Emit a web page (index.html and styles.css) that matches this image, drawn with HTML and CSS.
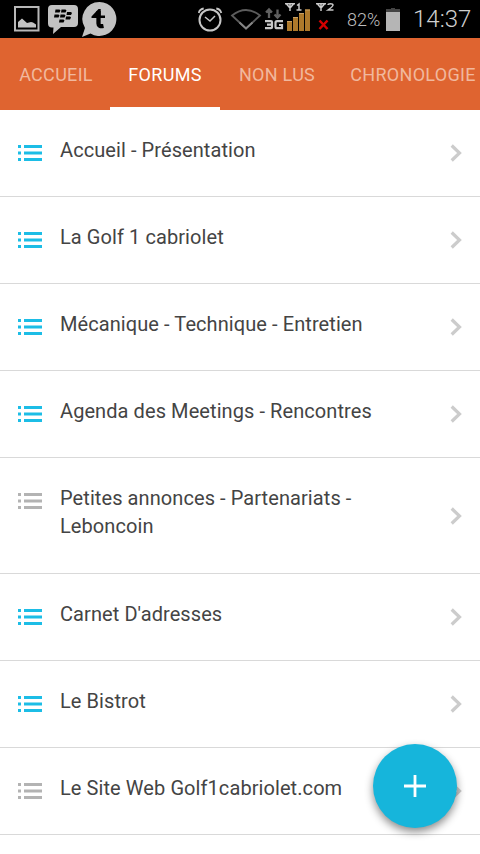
FILE: index.html
```html
<!DOCTYPE html>
<html lang="fr">
<head>
<meta charset="utf-8">
<title>Forums</title>
<link rel="stylesheet" href="styles.css">
</head>
<body>
<svg width="0" height="0" class="defs">
<symbol id="list" viewBox="0 0 24 16"><path d="M0 0h3v3H0zM6 0h18v3H6zM0 6.5h3v3H0zM6 6.5h18v3H6zM0 13h3v3H0zM6 13h18v3H6z" fill="currentColor"/></symbol>
<symbol id="chev" viewBox="0 0 12 18"><path d="M1.700 1.500L9.500 9l-7.800 7.500" fill="none" stroke="#ccc" stroke-width="3.200"/></symbol>
</svg>
<header class="status">
<svg class="s-pic" width="26" height="26" viewBox="0 0 26 26"><rect x="1" y="1" width="23.500" height="23.500" fill="none" stroke="#b8b8b8" stroke-width="2"/><path d="M4 21.500V16l4-3.500 5 4.500 4-1 2 .5 3 2v3z" fill="#c2c2c2"/></svg>
<svg class="s-bbm" width="31" height="32" viewBox="0 0 31 32"><path d="M4 1h22q4 0 4 4v14q0 4-4 4H13l-8 7 .5-6.500H4q-4 0-4-4V5q0-4 4-4z" fill="#c2c2c2"/><path d="M7.500 5.500h4l1 1-1 2H7zM13.500 5.500h4l1 1-1 2H13zM6.500 10.500h4l1 1-1 2H6zM12.500 10.500h4l1 1-1 2H12zM19 8h4l1 1-1 2h-4.500zM18 12.500h4l1 1-1 2h-4.500zM11.500 15.500h4l1 1-1 2H11z" fill="#000"/></svg>
<svg class="s-tap" width="36" height="37" viewBox="0 0 36 37"><path d="M18.500 1a17 17 0 1 1-9 31.500L1 36l3-9A17 17 0 0 1 18.500 1z" fill="#c2c2c2"/><path d="M17.500 10v12.500q0 3.500 5 2.500" fill="none" stroke="#000" stroke-width="4.300"/><path d="M10.500 17v-1.500l7-7.500h2.200v6.500H24V17z" fill="#000"/></svg>
<svg class="s-sys" width="141" height="34" viewBox="0 0 141 34">
<g fill="none" stroke="#c6c6c6" stroke-width="2"><circle cx="12" cy="20" r="10.500"/><path d="M7 17l5 4 5-5" stroke-width="1.500"/><path d="M.7 13q1-4 5-4.500M23.300 13q-1-4-5-4.500" stroke-width="1.800"/></g>
<path d="M34 15.500q14-11 28 0L48 28.500z" fill="none" stroke="#5c5c5c" stroke-width="1.800"/><path d="M41.500 22.500l6.500 6 6.500-6" fill="none" stroke="#858585" stroke-width="1.800"/>
<path d="M71 18v-7M68 12.500l3-3 3 3M79.500 9.500V17M76.500 14.500l3 3 3-3" fill="none" stroke="#606060" stroke-width="2.300"/>
<g fill="none" stroke="#c8c8c8" stroke-width="2.200"><path d="M67 21.200h6q1 0 1 1v5q0 1-1 1h-6M69 24.700h5M85 21.200h-6q-1.500 0-1.500 1.500v4q0 1.500 1.500 1.500h5V25h-3"/></g>
<g fill="none" stroke="#c8c8c8" stroke-width="1.500"><path d="M87 3.700h10M88.500 4l3.500 4 3.500-4M92 3v8M99 5.500l2-1.500v6M98.500 10h5M118 3.700h10M119.500 4l3.500 4 3.500-4M123 3v8M130 5q0-1.300 2.500-1.300T135 5q0 1.500-5 5h5.500"/></g>
<path d="M89 21h5v10h-5zM95 17h5v14h-5zM101 13h5v18h-5zM107 9.500h5V31h-5z" fill="#ad792b"/><path d="M89 21.500h5M95 17.500h5M101 13.500h5M107 10h5" stroke="#c9a063"/>
<path d="M121.500 20.500l8 8.500M129.500 20.500l-8 8.500" stroke="#d40000" stroke-width="2.500"/>
</svg>
<span class="pct">82%</span>
<svg class="s-bat" width="14" height="23" viewBox="0 0 14 23"><path d="M5 0h4v1h5v3H0V1h5z" fill="#444"/><path d="M0 4h14v19H0z" fill="#b5b5b5"/></svg>
<time class="clock">14:37</time>
</header>
<nav class="tabs">
<a class="tab">ACCUEIL</a><a class="tab active">FORUMS</a><a class="tab">NON LUS</a><a class="tab">CHRONOLOGIE</a>
</nav>
<main>
<div class="row"><svg class="list"><use href="#list"/></svg><span class="name">Accueil - Présentation</span><svg class="chev"><use href="#chev"/></svg></div>
<div class="row"><svg class="list"><use href="#list"/></svg><span class="name">La Golf 1 cabriolet</span><svg class="chev"><use href="#chev"/></svg></div>
<div class="row"><svg class="list"><use href="#list"/></svg><span class="name">Mécanique - Technique - Entretien</span><svg class="chev"><use href="#chev"/></svg></div>
<div class="row"><svg class="list"><use href="#list"/></svg><span class="name">Agenda des Meetings - Rencontres</span><svg class="chev"><use href="#chev"/></svg></div>
<div class="row tall read"><svg class="list"><use href="#list"/></svg><span class="name">Petites annonces - Partenariats - Leboncoin</span><svg class="chev"><use href="#chev"/></svg></div>
<div class="row"><svg class="list"><use href="#list"/></svg><span class="name">Carnet D'adresses</span><svg class="chev"><use href="#chev"/></svg></div>
<div class="row"><svg class="list"><use href="#list"/></svg><span class="name">Le Bistrot</span><svg class="chev"><use href="#chev"/></svg></div>
<div class="row read"><svg class="list"><use href="#list"/></svg><span class="name">Le Site Web Golf1cabriolet.com</span><svg class="chev"><use href="#chev"/></svg></div>
</main>
<button class="fab" aria-label="Ajouter"><svg width="22" height="22" viewBox="0 0 22 22"><path d="M11 0v22M0 11h22" stroke="#fff" stroke-width="2.800"/></svg></button>
</body>
</html>
```
FILE: styles.css
```css
* { box-sizing: border-box; }
body { margin: 0; width: 480px; height: 854px; overflow: hidden; position: relative; background: #fff; font-family: Roboto, "Liberation Sans", sans-serif; }
.defs { position: absolute; }
.status { display: flex; align-items: flex-start; height: 38px; background: #000; color: #bdbdbd; overflow: hidden; }
.status svg { flex: none; }
.s-pic { margin: 6px 0 0 14px; }
.s-bbm { margin: 4px 0 0 8px; }
.s-tap { margin: 1px 0 0 2px; }
.s-sys { margin-left: 81px; }
.pct { width: 33px; margin-left: 8px; font-size: 18px; font-weight: 300; line-height: 40px; white-space: nowrap; }
.s-bat { margin: 8px 0 0 6px; }
.clock { margin-left: 13px; font-size: 24px; font-weight: 300; line-height: 39px; color: #d0d0d0; }
.tabs { display: flex; height: 72px; background: #df6430; }
.tab { flex: none; width: 110px; font-size: 18px; letter-spacing: .3px; line-height: 74px; color: #f1b89e; white-space: nowrap; text-align: center; }
.tab:first-child { padding-left: 2px; }
.tab:nth-child(3) { width: 114px; }
.tab:last-child { width: 158px; }
.tab.active { color: #fff; border-bottom: 3px solid #fff; }
.row { display: flex; height: 87px; padding: 0 18px; border-bottom: 1px solid #d9d9d9; color: #1cbde6; }
.row.tall { height: 116px; }
.row.read { color: #b3b3b3; }
.list { flex: none; width: 24px; height: 16px; margin-top: 35px; }
.name { width: 320px; margin: 26px 0 0 18px; font-size: 20px; letter-spacing: .08px; line-height: 28px; color: #444; }
.chev { flex: none; align-self: center; width: 12px; height: 18px; margin-left: auto; }
.fab { position: absolute; left: 373px; top: 744px; width: 84px; height: 84px; padding: 0; border: 0; border-radius: 50%; background: #16b5db; display: flex; align-items: center; justify-content: center; box-shadow: 0 4px 8px rgba(0,0,0,.45); }
```
